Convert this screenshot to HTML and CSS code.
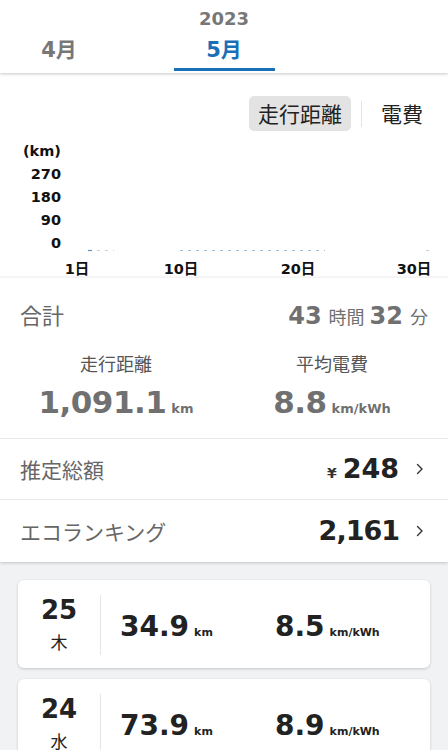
FILE: index.html
```html
<!DOCTYPE html>
<html lang="ja">
<head>
<meta charset="utf-8">
<title>走行記録</title>
<link rel="stylesheet" href="styles.css">
</head>
<body>
<header class="header">
  <div class="year">2023</div>
  <nav class="tabs">
    <div class="tab"><span class="tab-label">4月</span></div>
    <div class="tab tab-active"><span class="tab-label">5月</span><span class="tab-bar"></span></div>
    <div class="tab tab-empty"></div>
  </nav>
</header>

<section class="chart">
  <div class="toggle">
    <button class="toggle-btn active">走行距離</button>
    <span class="toggle-sep"></span>
    <button class="toggle-btn">電費</button>
  </div>
  <div class="plot">
    <div class="y-axis">
      <span>(km)</span>
      <span>270</span>
      <span>180</span>
      <span>90</span>
      <span>0</span>
    </div>
    <svg class="plot-area" viewBox="0 0 387 115" width="387" height="115">
      <line x1="27" y1="110.5" x2="31" y2="110.5" stroke="#5b93bd" stroke-width="1.2"/>
      <line x1="36" y1="110.5" x2="53" y2="110.5" stroke="#c9d3da" stroke-width="1.2" stroke-dasharray="3 5"/>
      <line x1="119" y1="110.5" x2="264" y2="110.5" stroke="#9dbdd3" stroke-width="1.2" stroke-dasharray="3 5"/>
      <line x1="365" y1="110.5" x2="368" y2="110.5" stroke="#c9d3da" stroke-width="1.2"/>
    </svg>
  </div>
  <div class="x-axis">
    <span class="x-label" style="left:77px">1日</span>
    <span class="x-label" style="left:181px">10日</span>
    <span class="x-label" style="left:298px">20日</span>
    <span class="x-label" style="left:414px">30日</span>
  </div>
</section>

<section class="summary">
  <div class="total-row">
    <span class="total-title">合計</span>
    <span class="total-time"><span class="num time-num">43</span><span class="time-unit">時間</span><span class="num time-num">32</span><span class="time-unit last">分</span></span>
  </div>
  <div class="stats">
    <div class="stat">
      <div class="stat-label">走行距離</div>
      <div class="stat-value num"><span class="stat-num">1,091.1</span><span class="stat-unit">km</span></div>
    </div>
    <div class="stat">
      <div class="stat-label">平均電費</div>
      <div class="stat-value num"><span class="stat-num">8.8</span><span class="stat-unit">km/kWh</span></div>
    </div>
  </div>
  <div class="link-row">
    <span class="link-title">推定総額</span>
    <span class="link-value num"><span class="yen">¥</span>248</span>
    <svg class="chev" viewBox="0 0 8 12" width="8" height="12"><path d="M1.5 1.5 L6 6 L1.5 10.5" fill="none" stroke="#333" stroke-width="1.4" stroke-linecap="round" stroke-linejoin="round"/></svg>
  </div>
  <div class="link-row last-row">
    <span class="link-title">エコランキング</span>
    <span class="link-value num tight">2,161</span>
    <svg class="chev" viewBox="0 0 8 12" width="8" height="12"><path d="M1.5 1.5 L6 6 L1.5 10.5" fill="none" stroke="#333" stroke-width="1.4" stroke-linecap="round" stroke-linejoin="round"/></svg>
  </div>
</section>

<section class="list">
  <div class="card">
    <div class="date">
      <span class="day-num num">25</span>
      <span class="weekday">木</span>
    </div>
    <div class="vals">
      <div class="val num"><span class="val-num">34.9</span><span class="val-unit">km</span></div>
      <div class="val num"><span class="val-num">8.5</span><span class="val-unit">km/kWh</span></div>
    </div>
  </div>
  <div class="card">
    <div class="date">
      <span class="day-num num">24</span>
      <span class="weekday">水</span>
    </div>
    <div class="vals">
      <div class="val num"><span class="val-num">73.9</span><span class="val-unit">km</span></div>
      <div class="val num"><span class="val-num">8.9</span><span class="val-unit">km/kWh</span></div>
    </div>
  </div>
</section>
</body>
</html>
```

FILE: styles.css
```css
* { box-sizing: border-box; }

body {
  margin: 0;
  width: 448px;
  background: #f1f2f4;
  font-family: "Noto Sans CJK JP", "Noto Sans", sans-serif;
  color: #222;
  overflow-x: hidden;
}

.num {
  font-family: "DejaVu Sans", "Noto Sans CJK JP", sans-serif;
  font-weight: 700;
}

/* Header */
.header {
  position: relative;
  z-index: 2;
  height: 73px;
  padding-top: 9px;
  background: #fff;
  box-shadow: 0 1px 3px rgba(0, 0, 0, 0.22);
  overflow: hidden;
}

.year {
  text-align: center;
  font-family: "DejaVu Sans", sans-serif;
  font-weight: 700;
  font-size: 18px;
  line-height: 20px;
  color: #777;
}

.tabs {
  display: flex;
  justify-content: center;
}

.tab {
  flex: 0 0 165px;
  height: 44px;
  padding-top: 8px;
  display: flex;
  flex-direction: column;
  align-items: center;
}

.tab-label {
  font-family: "DejaVu Sans", "Noto Sans CJK JP", sans-serif;
  font-weight: 700;
  font-size: 21px;
  line-height: 26px;
  color: #777;
}

.tab-active .tab-label { color: #1a70b8; }

.tab-bar {
  width: 101px;
  height: 3px;
  margin-top: 5px;
  background: #1a70b8;
}

/* Chart */
.chart {
  position: relative;
  z-index: 1;
  background: #fff;
  padding-top: 23px;
  height: 204px;
}

.toggle {
  display: flex;
  justify-content: flex-end;
  align-items: center;
  padding-right: 16px;
}

.toggle-btn {
  font-family: "Noto Sans CJK JP", sans-serif;
  font-size: 21px;
  line-height: 35px;
  height: 35px;
  padding: 0 9px;
  border: 0;
  border-radius: 5px;
  background: none;
  color: #222;
}

.toggle-btn.active { background: #e3e3e3; }

.toggle-sep {
  width: 1px;
  height: 26px;
  margin: 0 10px;
  background: #e4e4e4;
}

.plot {
  display: flex;
  margin-top: 9px;
}

.y-axis {
  width: 61px;
  display: flex;
  flex-direction: column;
  align-items: flex-end;
  font-family: "DejaVu Sans", sans-serif;
  font-weight: 700;
  font-size: 14.5px;
  line-height: 23px;
  color: #111;
}

.plot-area {
  display: block;
  width: 387px;
  height: 115px;
}

.x-axis {
  position: relative;
  height: 16px;
  margin-top: 6px;
  font-family: "DejaVu Sans", "Noto Sans CJK JP", sans-serif;
  font-weight: 700;
  font-size: 14.5px;
  line-height: 16px;
  color: #111;
}

.x-label {
  position: absolute;
  top: 0;
  transform: translateX(-50%);
  white-space: nowrap;
}

/* Summary */
.summary {
  position: relative;
  z-index: 1;
  background: #fff;
  border-top: 1px solid #f3f3f3;
  box-shadow: 0 1px 3px rgba(0, 0, 0, 0.2);
}

.total-row {
  display: flex;
  justify-content: space-between;
  align-items: baseline;
  height: 51px;
  padding: 21px 20px 0;
  line-height: 30px;
}

.total-title {
  font-size: 22px;
  line-height: 30px;
  color: #666;
}

.total-time {
  color: #707070;
  font-size: 24px;
  line-height: 30px;
}

.time-num { font-size: 24px; line-height: 30px; }

.time-unit {
  font-size: 18px;
  line-height: 1;
  margin: 0 5px 0 7px;
}

.time-unit.last { margin-right: 0; }

.stats {
  display: grid;
  grid-template-columns: 1fr 1fr;
  padding: 22px 8px 16px;
}

.stat { text-align: center; }

.stat-label {
  font-size: 18px;
  line-height: 24px;
  height: 24px;
  color: #555;
}

.stat-value {
  margin-top: 7px;
  height: 40px;
  font-size: 31px;
  line-height: 40px;
  color: #707070;
}

.stat-num {
  font-size: 31px;
  letter-spacing: -0.5px;
}

.stat-unit {
  font-size: 13px;
  line-height: 1;
  margin-left: 5px;
}

.link-row {
  display: flex;
  align-items: center;
  height: 61px;
  padding: 0 24px 0 20px;
  border-top: 1px solid #e9e9e9;
}

.link-row.last-row { height: 63px; padding-bottom: 1px; }

.link-title {
  flex: 1;
  font-size: 21px;
  color: #666;
}

.link-value {
  font-size: 27px;
  line-height: 32px;
  color: #222;
}

.link-value.tight { letter-spacing: -1px; }

.yen {
  font-size: 14px;
  line-height: 1;
  margin-right: 6px;
  color: #333;
}

.chev {
  display: block;
  margin-left: 17px;
  width: 8px;
  height: 12px;
}

/* List */
.list {
  display: flex;
  flex-direction: column;
  gap: 11px;
  padding: 18px 18px 0;
}

.card {
  display: flex;
  align-items: center;
  height: 88px;
  padding: 15px 0 13px;
  background: #fff;
  border-radius: 6px;
  box-shadow: 0 1px 3px rgba(0, 0, 0, 0.18);
}

.date {
  width: 83px;
  align-self: stretch;
  display: flex;
  flex-direction: column;
  align-items: center;
  padding-top: 1px;
  border-right: 1px solid #e5e5e5;
}

.day-num {
  font-size: 26px;
  line-height: 28px;
  color: #222;
}

.weekday {
  margin-top: 6px;
  font-size: 17px;
  line-height: 24px;
  color: #222;
}

.vals {
  display: flex;
  padding-left: 19px;
  margin-top: 4px;
}

.val {
  width: 155px;
  height: 32px;
  font-size: 28px;
  line-height: 32px;
  color: #222;
  white-space: nowrap;
}

.val-num { font-size: 28px; }

.val-unit {
  font-size: 11px;
  line-height: 1;
  margin-left: 5px;
}
```
